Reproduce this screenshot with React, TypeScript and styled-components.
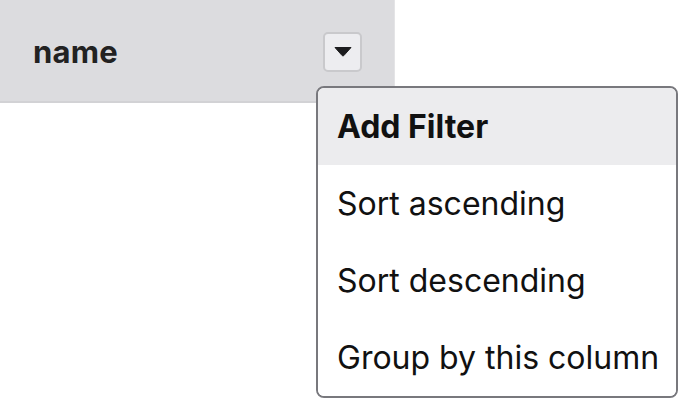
import React from "react";
import styled, { createGlobalStyle } from "styled-components";

const Global = createGlobalStyle`
html, body {
  margin: 0;
  padding: 0;
  background: #fff;
  font-family: Inter, "Liberation Sans", sans-serif;
}
`;

const Page = styled.div`
position: relative;
width: 678px;
height: 398px;
overflow: hidden;
`;

const Header = styled.div`
width: 395px;
height: 103px;
box-sizing: border-box;
background: #dcdcdf;
border-right: 1px solid #e4e4e6;
border-bottom: 2px solid #d2d2d5;
display: flex;
align-items: center;
justify-content: space-between;
padding: 2px 32px 0 33px;
`;

const Title = styled.span`
font-size: 31px;
font-weight: 700;
color: #222;
letter-spacing: 0.2px;
`;

const Toggle = styled.button.attrs({ type: "button" })`
width: 39px;
height: 40px;
box-sizing: border-box;
border: 2px solid #c9c9cc;
border-radius: 5px;
background: #ededf0;
display: flex;
align-items: center;
justify-content: center;
padding: 0;
`;

const Menu = styled.ul`
position: absolute;
left: 316px;
top: 86px;
width: 362px;
box-sizing: border-box;
margin: 0;
padding: 0;
list-style: none;
background: #fff;
border: 2px solid #78787d;
border-radius: 8px;
overflow: hidden;
`;

const Item = styled.li<{ $active?: boolean }>`
height: 77px;
display: flex;
align-items: center;
padding-left: 19px;
font-size: 32px;
color: #111;
font-weight: ${(p) => (p.$active ? 650 : 400)};
background: ${(p) => (p.$active ? "#ececee" : "#fff")};
white-space: nowrap;
`;

const App: React.FC = () => {
    return <Page>
        <Global />
        <Header>
            <Title>name</Title>
            <Toggle>
                <svg width="18" height="11" viewBox="0 0 18 11">
                    <path d="M1 1.5 H17 L9.8 9.6 Q9 10.4 8.2 9.6 Z" fill="#1c1c1e" stroke="#1c1c1e" strokeWidth="1" strokeLinejoin="round" />
                </svg>
            </Toggle>
        </Header>
        <Menu>
            <Item $active>Add Filter</Item>
            <Item>Sort ascending</Item>
            <Item>Sort descending</Item>
            <Item>Group by this column</Item>
        </Menu>
    </Page>
}

export default App;
